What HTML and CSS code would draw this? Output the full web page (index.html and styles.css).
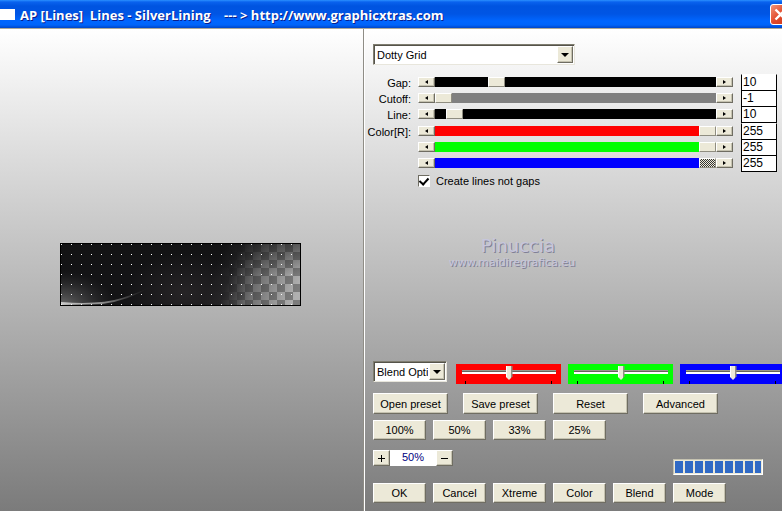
FILE: index.html
```html
<!DOCTYPE html>
<html lang="en">
<head>
<meta charset="utf-8">
<title>AP [Lines] Lines - SilverLining</title>
<link rel="stylesheet" href="styles.css">
</head>
<body>
<header class="titlebar">
  <span class="app-icon"></span>
  <h1 class="title">AP [Lines]  Lines - SilverLining    --- &gt; http://www.graphicxtras.com</h1>
  <button class="close" aria-label="Close">
    <svg width="21" height="21" viewBox="0 0 21 21"><path d="M5.5 5.5l10 10M15.5 5.5l-10 10" stroke="#fff" stroke-width="2.4"/></svg>
  </button>
</header>
<main class="workspace">
  <section class="preview" aria-label="Preview">
    <svg class="preview-image" width="241" height="63" viewBox="0 0 241 63">
      <defs>
        <pattern id="checks" x="1" y="1" width="16" height="16" patternUnits="userSpaceOnUse">
          <rect width="16" height="16" fill="#7c7c7c"/>
          <path d="M8 0h8v8h-8zM0 8h8v8h-8z" fill="#b0b0b0"/>
        </pattern>
        <pattern id="dots" x="1" y="1" width="10" height="10" patternUnits="userSpaceOnUse">
          <rect width="1" height="1" fill="#fff"/>
        </pattern>
        <linearGradient id="shade" gradientUnits="userSpaceOnUse" x1="157" y1="18" x2="238" y2="48">
          <stop offset="0" stop-color="#141416"/>
          <stop offset=".2" stop-color="#1c1c1e" stop-opacity=".94"/>
          <stop offset=".5" stop-color="#29292a" stop-opacity=".5"/>
          <stop offset="1" stop-color="#444" stop-opacity="0"/>
        </linearGradient>
        <linearGradient id="top" x1="0" y1="0" x2="0" y2="1">
          <stop offset="0" stop-color="#111" stop-opacity=".5"/>
          <stop offset=".5" stop-color="#111" stop-opacity="0"/>
        </linearGradient>
        <radialGradient id="warm" gradientUnits="userSpaceOnUse" cx="0" cy="0" r="1" gradientTransform="translate(125 50) scale(60 40)">
          <stop offset="0" stop-color="#2b282a" stop-opacity=".8"/>
          <stop offset="1" stop-color="#2b282a" stop-opacity="0"/>
        </radialGradient>
        <radialGradient id="corner" gradientUnits="userSpaceOnUse" cx="0" cy="0" r="1" gradientTransform="translate(1 62) scale(54 34)">
          <stop offset="0" stop-color="#aaa" stop-opacity=".55"/>
          <stop offset=".5" stop-color="#888" stop-opacity=".28"/>
          <stop offset="1" stop-color="#555" stop-opacity="0"/>
        </radialGradient>
        <linearGradient id="arc" gradientUnits="userSpaceOnUse" x1="0" y1="0" x2="90" y2="0">
          <stop offset="0" stop-color="#ccc"/>
          <stop offset=".5" stop-color="#888"/>
          <stop offset="1" stop-color="#444" stop-opacity="0"/>
        </linearGradient>
      </defs>
      <rect width="241" height="63" fill="url(#checks)"/>
      <rect width="241" height="63" fill="url(#shade)"/>
      <rect width="241" height="63" fill="url(#top)"/>
      <rect x="60" width="130" height="63" fill="url(#warm)"/>
      <rect width="80" height="63" fill="url(#corner)"/>
      <path d="M1 59Q40 62 62 55Q78 50 90 44Q68 58 42 61L1 62z" fill="url(#arc)"/>
      <rect width="241" height="63" fill="url(#dots)"/>
      <rect x=".5" y=".5" width="240" height="62" fill="none" stroke="#000"/>
    </svg>
  </section>
  <section class="controls">
    <div class="combo combo-wide">
      <select class="select" aria-label="Preset"><option>Dotty Grid</option></select>
      <span class="drop"></span>
    </div>
    <div class="sliders">
      <div class="row">
        <label class="name" for="gap">Gap:</label>
        <div class="scroll"><button class="arrow prev" aria-label="Decrease"></button><input class="range black" id="gap" type="range" value="20"><button class="arrow next" aria-label="Increase"></button></div>
        <input class="field" type="text" value="10" aria-label="Gap value">
      </div>
      <div class="row">
        <label class="name" for="cutoff">Cutoff:</label>
        <div class="scroll"><button class="arrow prev" aria-label="Decrease"></button><input class="range gray" id="cutoff" type="range" value="0"><button class="arrow next" aria-label="Increase"></button></div>
        <input class="field" type="text" value="-1" aria-label="Cutoff value">
      </div>
      <div class="row">
        <label class="name" for="line">Line:</label>
        <div class="scroll"><button class="arrow prev" aria-label="Decrease"></button><input class="range black" id="line" type="range" value="4"><button class="arrow next" aria-label="Increase"></button></div>
        <input class="field" type="text" value="10" aria-label="Line value">
      </div>
    </div>
    <div class="sliders sliders-color">
      <div class="row">
        <label class="name" for="red">Color[R]:</label>
        <div class="scroll"><button class="arrow prev" aria-label="Decrease"></button><input class="range red" id="red" type="range" max="255" value="255"><button class="arrow next" aria-label="Increase"></button></div>
        <input class="field" type="text" value="255" aria-label="Red value">
      </div>
      <div class="row">
        <span></span>
        <div class="scroll"><button class="arrow prev" aria-label="Decrease"></button><input class="range green" type="range" max="255" value="255" aria-label="Green"><button class="arrow next" aria-label="Increase"></button></div>
        <input class="field" type="text" value="255" aria-label="Green value">
      </div>
      <div class="row">
        <span></span>
        <div class="scroll"><button class="arrow prev" aria-label="Decrease"></button><input class="range blue active" type="range" max="255" value="255" aria-label="Blue"><button class="arrow next" aria-label="Increase"></button></div>
        <input class="field" type="text" value="255" aria-label="Blue value">
      </div>
    </div>
    <label class="check"><input class="box" type="checkbox" checked>Create lines not gaps</label>
    <div class="credit">
      <strong class="credit-name">Pinuccia</strong>
      <span class="credit-site">www.maidiregrafica.eu</span>
    </div>
    <div class="blend">
      <div class="combo combo-small">
        <select class="select" aria-label="Blend options"><option>Blend Options</option></select>
        <span class="drop"></span>
      </div>
      <div class="tints">
        <div class="tint red"><input class="track" type="range" aria-label="Red tint"></div>
        <div class="tint green"><input class="track" type="range" aria-label="Green tint"></div>
        <div class="tint blue"><input class="track" type="range" aria-label="Blue tint"></div>
      </div>
    </div>
    <div class="buttons presets">
      <button class="btn wide">Open preset</button>
      <button class="btn wide">Save preset</button>
      <button class="btn wide">Reset</button>
      <button class="btn wide">Advanced</button>
    </div>
    <div class="buttons">
      <button class="btn">100%</button>
      <button class="btn">50%</button>
      <button class="btn">33%</button>
      <button class="btn">25%</button>
    </div>
    <div class="status">
      <div class="zoom">
        <button class="step" aria-label="Zoom in"><svg width="7" height="7"><path d="M0 3.5h7M3.5 0v7" stroke="#000"/></svg></button>
        <output class="level">50%</output>
        <button class="step" aria-label="Zoom out"><svg width="7" height="7"><path d="M0 3.5h7" stroke="#000"/></svg></button>
      </div>
      <div class="progress" role="progressbar" aria-label="Rendering"><i></i><i></i><i></i><i></i><i></i><i></i><i></i><i></i><i class="last"></i></div>
    </div>
    <div class="buttons">
      <button class="btn">OK</button>
      <button class="btn">Cancel</button>
      <button class="btn">Xtreme</button>
      <button class="btn">Color</button>
      <button class="btn">Blend</button>
      <button class="btn">Mode</button>
    </div>
  </section>
</main>
</body>
</html>
```
FILE: styles.css
```css
* { box-sizing: border-box; }

body {
  margin: 0;
  min-height: 100vh;
  display: flex;
  flex-direction: column;
  overflow: hidden;
  font: 11px/14px "Liberation Sans", Arial, sans-serif;
  color: #000;
}

button, input, select {
  font: inherit;
  color: inherit;
  margin: 0;
  padding: 0;
  border-radius: 0;
}

/* Title bar */
.titlebar {
  display: flex;
  align-items: center;
  height: 28px;
  overflow: hidden;
  background: linear-gradient(#2b90ff 0, #0a62ee 2px, #0054e0 6px, #0055e4 14px, #0066ff 21px, #0064fa 25px, #0046c8 28px);
}

.app-icon {
  width: 15px;
  height: 11px;
  background: #fff;
  flex: none;
}

.title {
  flex: 1;
  margin: 0 0 0 5px;
  padding-top: 2px;
  font: bold 13px/28px "Open Sans", "Noto Sans", sans-serif;
  color: #fff;
  white-space: pre;
  text-shadow: 1px 1px #0a1e8c;
}

.close {
  flex: none;
  width: 21px;
  height: 21px;
  margin-right: -9px;
  border: 1px solid #fff;
  border-radius: 3px;
  background: linear-gradient(135deg, #f0957a, #e2492a 50%, #c8381a);
}

.close svg { display: block; margin: -1px; }

/* Panels */
.workspace {
  flex: 1;
  display: grid;
  grid-template-columns: 365px 1fr;
  border-top: 1px solid #aca899;
  background: linear-gradient(#fff, #7b7b7b);
}

.preview {
  display: flex;
  align-items: center;
  padding: 9px 60px 0;
  border-right: 1px solid #fff;
  box-shadow: inset -1px 0 #8f8d86;
}

.preview-image { display: block; flex: none; }

.controls {
  display: flex;
  flex-direction: column;
  min-width: 0;
  padding: 15px 5px 8px 8px;
}

/* Combo boxes */
.combo {
  position: relative;
  border: 1px solid;
  border-color: #7f7d70 #e8e6dc #e8e6dc #7f7d70;
}

.combo-wide { width: 202px; height: 21px; }
.combo-small { width: 74px; height: 21px; flex: none; }

.select {
  display: block;
  width: 100%;
  height: 100%;
  padding: 0 18px 0 3px;
  appearance: none;
  border: 0;
  background: #fff;
  box-shadow: inset 1px 1px #55534a;
}

.drop {
  position: absolute;
  top: 1px;
  right: 1px;
  bottom: 1px;
  width: 16px;
  display: grid;
  place-items: center;
  pointer-events: none;
}

.drop::after {
  content: "";
  border: 4px solid transparent;
  border-top-color: #000;
  border-bottom: 0;
}

.drop, .arrow, .btn, .step {
  background: #ece9d8;
  border: 1px solid;
  border-color: #fff #6f6d62 #6f6d62 #fff;
  box-shadow: inset -1px -1px #c5c2b0;
}

/* Slider rows */
.sliders { margin-top: 9px; margin-left: -3px; }
.sliders-color { margin-top: 1px; }

.row {
  display: grid;
  grid-template-columns: 41px 1fr 36px;
  column-gap: 7px;
  align-items: start;
  height: 16px;
}

.name { text-align: right; white-space: nowrap; padding-top: 2px; justify-self: end; }

.scroll { display: flex; height: 10px; margin-top: 3px; margin-right: 1px; }

.arrow { position: static; width: 17px; height: 10px; flex: none; display: grid; place-items: center; }

.arrow::after { content: ""; border: 2px solid transparent; }
.prev::after { border-right: 3px solid #000; border-left: 0; }
.next::after { border-left: 3px solid #000; border-right: 0; }

.range {
  flex: 1;
  min-width: 0;
  height: 10px;
  appearance: none;
}

.range::-webkit-slider-thumb {
  appearance: none;
  width: 17px;
  height: 10px;
  background: #ece9d8;
  border: 1px solid;
  border-color: #fff #8f8d80 #8f8d80 #fff;
}

.active::-webkit-slider-thumb {
  background: repeating-conic-gradient(#333 0 25%, #ece9d8 0 50%) 0 0 / 2px 2px;
}

.black { background: #000; }
.gray { background: #808080; }
.red { background: #f00; }
.green { background: #0f0; }
.blue { background: #00f; }

.field {
  width: 36px;
  height: 17px;
  padding: 0 0 2px 1px;
  border: 1px solid #000;
  background: #fff;
  font-size: 12px;
}

.sliders .row:first-child .field { border-top-color: #fff; }

/* Checkbox */
.check {
  display: flex;
  align-items: center;
  gap: 6px;
  margin: 3px 0 0 45px;
}

.box {
  appearance: none;
  width: 12px;
  height: 12px;
  display: grid;
  place-items: center;
  background: #fff;
  border: 1px solid;
  border-color: #6f6d62 #fff #fff #6f6d62;
}

.box:checked::after {
  content: "";
  width: 4px;
  height: 7px;
  margin-top: -2px;
  border: solid #000;
  border-width: 0 2px 2px 0;
  transform: rotate(42deg);
}

/* Credit */
.credit {
  display: flex;
  flex-direction: column;
  width: 278px;
  margin-top: 48px;
  text-align: center;
  color: #c6c6dc;
  text-shadow: 1px 1px #808096;
  font-family: "DejaVu Sans", sans-serif;
}

.credit-name { padding-left: 12px; font-size: 18px; line-height: 20px; font-weight: normal; }
.credit-site { font-size: 11px; line-height: 14px; }

/* Blend row */
.blend { display: flex; gap: 9px; margin-top: auto; margin-right: -5px; }

.tints { display: flex; flex: 1; gap: 7px; min-width: 0; margin-top: 3px; overflow: hidden; }

.tint {
  flex: none;
  width: 105px;
  height: 20px;
  padding: 2px 6px 0;
}

.track {
  appearance: none;
  display: block;
  width: 94px;
  height: 18px;
  background:
    linear-gradient(#000, #000) 3px 15px / 1px 3px no-repeat,
    linear-gradient(#000, #000) 89px 15px / 1px 3px no-repeat,
    linear-gradient(#99978c 0 1px, #66645c 1px 2px, #fff 2px) 0 4px / 100% 4px no-repeat;
}

.track::-webkit-slider-thumb {
  appearance: none;
  width: 7px;
  height: 14px;
  margin-top: -4px;
  background: linear-gradient(90deg, #fff 0 1px, #ece9d8 1px 5px, #918f82 5px);
  clip-path: polygon(0 0, 100% 0, 100% 75%, 50% 100%, 0 75%);
}

/* Buttons */
.buttons { display: flex; gap: 7px; margin-top: 6px; }
.presets { gap: 15px; margin-top: 9px; }

.btn { width: 53px; height: 20px; white-space: nowrap; }
.wide { width: 75px; height: 21px; }

.status {
  display: flex;
  align-items: flex-start;
  gap: 220px;
  margin: 10px 0 2px;
}

.zoom { display: flex; height: 16px; background: #fff; color: #000080; }

.step { width: 17px; height: 16px; display: grid; place-items: center; }
.step svg { display: block; }

.level { width: 46px; text-align: center; }

.progress {
  display: flex;
  gap: 2px;
  width: 90px;
  height: 16px;
  margin-top: 9px;
  padding: 1px;
  border: 1px solid;
  border-color: #c5c2b0 #fff #fff #c5c2b0;
  background: #ece9d8;
}

.progress i { width: 8px; background: #316ac5; }
.progress .last { width: 6px; }
```
